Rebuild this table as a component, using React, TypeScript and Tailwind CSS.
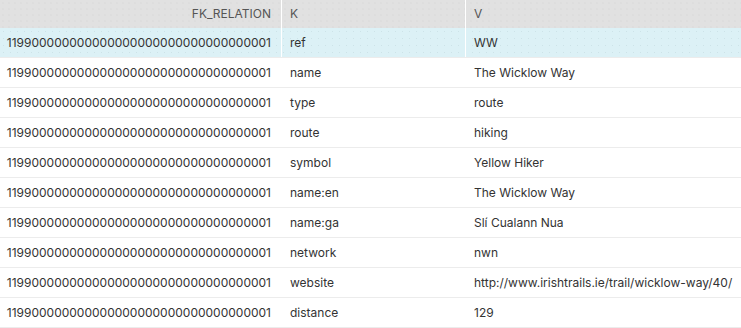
const rows = [
  ['ref', 'WW'],
  ['name', 'The Wicklow Way'],
  ['type', 'route'],
  ['route', 'hiking'],
  ['symbol', 'Yellow Hiker'],
  ['name:en', 'The Wicklow Way'],
  ['name:ga', 'Slí Cualann Nua'],
  ['network', 'nwn'],
  ['website', 'http://www.irishtrails.ie/trail/wicklow-way/40/'],
  ['distance', '129'],
]

const id = '1199' + '0'.repeat(31) + '1'

export default function App() {
  return (
    <div className="w-[741px] h-[328px] overflow-hidden bg-white text-[12px] text-[#333] font-['Inter',sans-serif]">
      {/* header */}
      <div className="grid grid-cols-[281px_1px_183px_1px_1fr] h-[28px] bg-[#e1e1e1] bg-[radial-gradient(#d8d8d8_0.6px,transparent_0.8px)] bg-[length:6px_6px] text-[#555]">
        <div className="flex items-center justify-end pr-[10px]">FK_RELATION</div>
        <div className="bg-white" />
        <div className="flex items-center pl-[8px]">K</div>
        <div className="bg-white" />
        <div className="flex items-center pl-[8px]">V</div>
      </div>

      {rows.map(([k, v], i) => (
        <div
          key={k}
          className={
            'grid grid-cols-[281px_1px_183px_1px_1fr] h-[30px] border-b border-[#ececec] ' +
            (i === 0
              ? 'bg-[#dcf1f6] bg-[radial-gradient(#cde3e8_0.6px,transparent_0.8px)] bg-[length:7px_7px]'
              : 'bg-white')
          }
        >
          <div className="flex items-center justify-end pr-[10px] whitespace-nowrap">{id}</div>
          <div className={i === 0 ? 'bg-white' : ''} />
          <div className="flex items-center pl-[8px]">{k}</div>
          <div className={i === 0 ? 'bg-white' : ''} />
          <div className="flex items-center pl-[8px]">{v}</div>
        </div>
      ))}
    </div>
  )
}
